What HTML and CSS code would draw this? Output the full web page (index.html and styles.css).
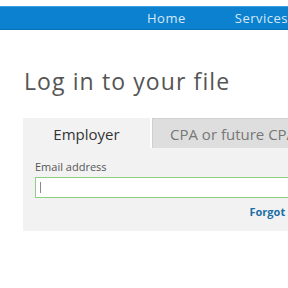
FILE: index.html
```html
<!DOCTYPE html>
<html lang="en">
<head>
    <meta charset="UTF-8">
    <title>Log in to your file</title>
    <link rel="stylesheet" href="styles.css">
</head>
<body>
<div class="topbar">
    <a href="#" class="nav-home">Home</a>
    <a href="#" class="nav-services">Services</a>
</div>

<div class="main">
    <h1>Log in to your file</h1>

    <div class="login-box">
        <div class="tabs">
            <div class="tab active">Employer</div>
            <div class="tab">CPA or future CPA</div>
        </div>
        <div class="panel">
            <label class="field-label">Email address</label>
            <div class="input"><span class="caret"></span></div>
            <div class="forgot"><a href="#">Forgot password?</a></div>
        </div>
    </div>
</div>
</body>
</html>
```

FILE: styles.css
```css
*{
    box-sizing: border-box;
}
html{
    overflow: hidden;
}
body{
    margin: 0;
    font-family: "Open Sans", "Liberation Sans", sans-serif;
    background: #fff;
}
.topbar{
    margin-top: 6px;
    height: 24px;
    background: #0b81cf;
    border-top: 1px solid #3fa0e0;
    border-bottom: 1px solid #0a6fb4;
    display: flex;
    align-items: center;
    white-space: nowrap;
}
.topbar a{
    color: #d6e8f7;
    text-decoration: none;
    font-size: 13px;
    letter-spacing: 0.5px;
}
.nav-home{
    margin-left: 147px;
}
.nav-services{
    margin-left: 49px;
}
.main{
    padding-left: 23px;
}
h1{
    margin: 36px 0 0 1px;
    font-size: 23px;
    font-weight: normal;
    color: #555;
    letter-spacing: 1.1px;
    line-height: 30px;
}
.login-box{
    margin-top: 22px;
    width: 335px;
}
.tabs{
    display: flex;
    gap: 2px;
}
.tab{
    height: 30px;
    line-height: 30px;
    font-size: 15px;
    color: #777;
    white-space: nowrap;
    background: #dedede;
    border: 1px solid #d0d0d0;
    border-bottom: none;
    padding-left: 17px;
    flex: 1;
    overflow: hidden;
}
.tab.active{
    flex: 0 0 127px;
    padding-left: 0;
    text-align: center;
    background: #f2f2f2;
    border-color: #f2f2f2;
    color: #333;
}
.panel{
    background: #f2f2f2;
    padding: 12px 12px 12px 12px;
}
.field-label{
    display: block;
    font-size: 11px;
    color: #555;
    line-height: 14px;
}
.input{
    margin-top: 3px;
    height: 21px;
    background: #fff;
    border: 1px solid #8fcf84;
    padding: 4px 4px;
}
.caret{
    display: block;
    width: 1px;
    height: 11px;
    background: #888;
}
.forgot{
    text-align: right;
    margin-top: 7px;
    font-size: 11px;
    line-height: 14px;
}
.forgot a{
    color: #1c6fa6;
    font-weight: bold;
    text-decoration: none;
}
```
